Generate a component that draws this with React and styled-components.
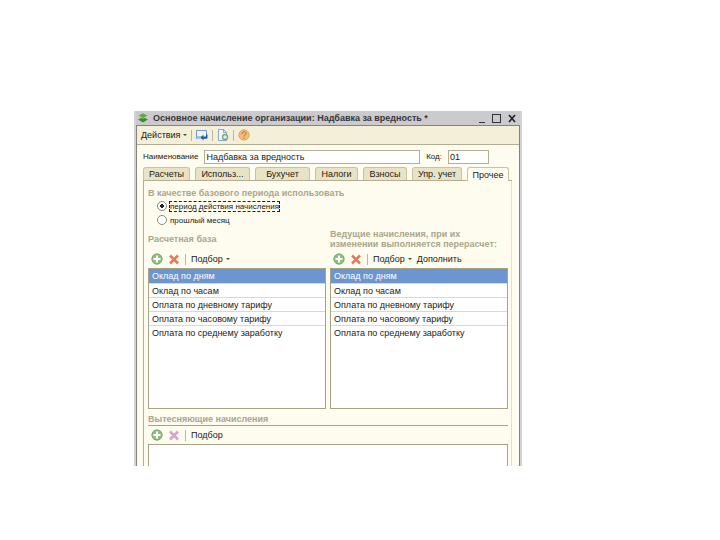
import React, { useState } from 'react';
import styled, { createGlobalStyle, css } from 'styled-components';

const GlobalStyle = createGlobalStyle`
  * {
    box-sizing: border-box;
  }

  body {
    margin: 0;
    background: #fff;
    color: #1c1a14;
    font-family: 'Liberation Sans', Arial, sans-serif;
    font-size: 9px;
    line-height: 12px;
  }

  button,
  input {
    font: inherit;
    color: inherit;
  }
`;

const Page = styled.main`
  padding: 111px 198px 74px 134px;
`;

const Window = styled.section`
  border: 2px solid #d3d3d5;
  border-top: 0;
  border-bottom: 0;
`;

const WindowBody = styled.div`
  background: #fefcee;
  border: 1px solid #85837a;
  border-bottom: 0;
`;

const TitleBar = styled.header`
  display: flex;
  align-items: center;
  gap: 4px;
  height: 14px;
  padding: 0 2px 0 1px;
  background: #cbcbcd;
`;

const Title = styled.h1`
  flex: 1;
  margin: 0;
  color: #36363a;
  font-size: 9px;
  line-height: 14px;
  white-space: nowrap;
`;

const WindowButtons = styled.div`
  display: flex;
  gap: 3px;
`;

const WindowButton = styled.button`
  display: flex;
  width: 12px;
  height: 12px;
  padding: 0;
  border: 0;
  background: none;
`;

const Toolbar = styled.div`
  display: flex;
  align-items: center;
  gap: 4px;
  height: 19px;
  padding: 0 4px;
  background: #f3efd9;
  border-bottom: 1px solid #b5ae92;
`;

const ToolButton = styled.button`
  display: flex;
  align-items: center;
  gap: 3px;
  padding: 0;
  border: 0;
  background: none;
  white-space: nowrap;
`;

const Separator = styled.span`
  width: 1px;
  height: 11px;
  background: #bdb799;
`;

const Caret = styled.span`
  border: 2px solid transparent;
  border-top-color: #4b4738;
  border-bottom: 0;
`;

const Fields = styled.div`
  display: flex;
  align-items: center;
  gap: 6px;
  padding: 5px 30px 0 6px;
`;

const FieldLabel = styled.label`
  font-size: 8px;
`;

const TextInput = styled.input`
  flex: ${({ $wide }) => ($wide ? '1' : '0 0 41px')};
  min-width: 0;
  height: 14px;
  padding: 0 1px;
  background: #fff;
  border: 1px solid #b5ae92;
  outline: 0;
`;

const TabList = styled.div`
  display: flex;
  align-items: flex-end;
  gap: 5px;
  margin: 3px 7px 0 6px;
  padding-right: 3px;
  border-bottom: 1px solid #b5ae92;
`;

const Tab = styled.button`
  flex: ${({ $width }) => `1 1 ${$width}px`};
  height: 13px;
  padding: 1px 0 0;
  background: #e9e3c6;
  border: 1px solid #c9c2a0;
  border-bottom: 0;
  border-radius: 3px 3px 0 0;
  line-height: 11px;
  white-space: nowrap;

  ${({ $active }) =>
    $active &&
    css`
      height: 14px;
      margin-bottom: -1px;
      background: #fefcee;
    `}
`;

const Panel = styled.div`
  margin: 0 7px 0 6px;
  padding: 6px 3px 0 4px;
  border-left: 1px solid #b5ae92;
  border-right: 1px solid #e6e0c8;
`;

const Heading = styled.h2`
  margin: 0;
  color: #aba68c;
  font-size: 9px;
  line-height: ${({ $tight }) => ($tight ? '10px' : '12px')};
`;

const Radios = styled.div`
  display: flex;
  flex-direction: column;
  align-items: flex-start;
  padding-left: 9px;
  font-size: 8px;
`;

const RadioLabel = styled.label`
  display: flex;
  align-items: center;
  gap: 3px;
  height: 14px;
  line-height: 9px;
`;

const Radio = styled.input`
  appearance: none;
  width: 10px;
  height: 10px;
  margin: 0;
  background: #fff;
  border: 1px solid #8e8a7a;
  border-radius: 50%;

  &:checked {
    background: radial-gradient(#222 0 2px, #fff 2px);
  }

  &:checked + span {
    outline: 1px dashed #222;
  }
`;

const Columns = styled.div`
  display: grid;
  grid-template-columns: 1fr 1fr;
  gap: 4px;
  margin-top: 1px;
`;

const ColumnHeading = styled.div`
  display: flex;
  align-items: center;
  height: 22px;
`;

const ListToolbar = styled.div`
  display: flex;
  align-items: center;
  gap: 5px;
  height: 18px;
  padding: 0 3px;
`;

const List = styled.ul`
  height: 141px;
  margin: 0;
  padding: 0;
  background: #fff;
  border: 1px solid #a8a287;
  list-style: none;
`;

const Row = styled.li`
  height: 14px;
  padding: 1px 3px;
  border-bottom: 1px solid #d8d8d8;
  white-space: nowrap;

  &:first-child {
    height: 15px;
  }

  &:last-child {
    border-bottom: 0;
  }

  ${({ $selected }) =>
    $selected &&
    css`
      background: #6b96cf;
      color: #fff;
    `}
`;

const Displaced = styled.section`
  margin-top: 4px;
`;

const DisplacedHeader = styled.div`
  border-bottom: 1px solid #a8a287;
`;

const DisplacedList = styled.div`
  height: 22px;
  background: #fff;
  border: 1px solid #a8a287;
  border-bottom: 0;
`;

const LogoIcon = () => (
  <svg width="12" height="12" viewBox="0 0 12 12">
    <path d="M6 5l5 2.5L6 10.5 1 7.5z" fill="#3f8d2c" />
    <path d="M6 1l5 2.5L6 6.5 1 3.5z" fill="#62ac3f" stroke="#d7e8c8" strokeWidth=".4" />
  </svg>
);

const MinimizeIcon = () => (
  <svg width="12" height="12" viewBox="0 0 12 12">
    <path d="M3 10.5h6" stroke="#33333a" />
  </svg>
);

const MaximizeIcon = () => (
  <svg width="12" height="12" viewBox="0 0 12 12">
    <path d="M1 2.5h9M1.5 2v8.5M9.5 2v8.5M1 10.5h9" fill="none" stroke="#33333a" />
  </svg>
);

const CloseIcon = () => (
  <svg width="12" height="12" viewBox="0 0 12 12">
    <path d="M3 3l6 7M9 3l-6 7" stroke="#26262c" strokeWidth="1.8" />
  </svg>
);

const AddIcon = () => (
  <svg width="12" height="12" viewBox="0 0 12 12">
    <circle cx="6" cy="6" r="5.2" fill="#8fbd82" stroke="#6fa163" strokeWidth=".8" />
    <path d="M6 2.5v7M2.5 6h7" stroke="#fff" strokeWidth="2" />
  </svg>
);

const RemoveIcon = ({ muted }) => (
  <svg width="12" height="12" viewBox="0 0 12 12">
    <path d="M2 2.5l8 8M10 2.5l-8 8" stroke={muted ? '#d6a4ca' : '#df7a60'} strokeWidth="2.5" />
  </svg>
);

const SaveIcon = () => (
  <svg width="12" height="12" viewBox="0 0 12 12">
    <path d="M.5 1.5h10v8H.5z" fill="#eef4fa" stroke="#7199c9" />
    <path d="M1 7h5v3H1z" fill="#a9c3e2" />
    <path d="M4.5 8.5l3-3v2H10v-2h1.5v4h-4v2z" fill="#285f9f" />
  </svg>
);

const DocumentIcon = () => (
  <svg width="12" height="12" viewBox="0 0 12 12">
    <path d="M1.5.5h5l3 3v8h-8z" fill="#f3f7fb" stroke="#88a7cc" />
    <path d="M6.5.5v3h3" fill="none" stroke="#88a7cc" />
    <circle cx="8" cy="8" r="2.5" fill="#e4f0e0" stroke="#7cab80" strokeWidth="1.4" />
  </svg>
);

const HelpIcon = () => (
  <svg width="12" height="12" viewBox="0 0 12 12">
    <circle cx="6" cy="6" r="5.2" fill="#f1bd78" stroke="#d9a05c" strokeWidth=".8" />
    <path d="M4 5c0-3 4-3 4-.5C8 6 6 5.5 6 7.5M6 8.5v1.2" fill="none" stroke="#b86c35" />
  </svg>
);

const tabs = [
  { name: 'Расчеты', width: 47 },
  { name: 'Использ...', width: 55 },
  { name: 'Бухучет', width: 55 },
  { name: 'Налоги', width: 43 },
  { name: 'Взносы', width: 44 },
  { name: 'Упр. учет', width: 50 },
  { name: 'Прочее', width: 42 },
];

const accruals = [
  'Оклад по дням',
  'Оклад по часам',
  'Оплата по дневному тарифу',
  'Оплата по часовому тарифу',
  'Оплата по среднему заработку',
];

const ListActions = ({ muted, fill, plain }) => (
  <ListToolbar>
    <ToolButton aria-label="Добавить"><AddIcon /></ToolButton>
    <ToolButton aria-label="Удалить"><RemoveIcon muted={muted} /></ToolButton>
    <Separator />
    <ToolButton>Подбор {!plain && <Caret />}</ToolButton>
    {fill && <ToolButton>Дополнить</ToolButton>}
  </ListToolbar>
);

const AccrualList = () => {
  const [selected, setSelected] = useState(0);

  return (
    <List>
      {accruals.map((name, index) => (
        <Row key={name} $selected={index === selected} onClick={() => setSelected(index)}>
          {name}
        </Row>
      ))}
    </List>
  );
};

const App = () => {
  const [activeTab, setActiveTab] = useState('Прочее');
  const [name, setName] = useState('Надбавка за вредность');
  const [code, setCode] = useState('01');

  return (
    <Page>
      <GlobalStyle />
      <Window>
        <TitleBar>
          <LogoIcon />
          <Title>Основное начисление организации: Надбавка за вредность *</Title>
          <WindowButtons>
            <WindowButton aria-label="Свернуть"><MinimizeIcon /></WindowButton>
            <WindowButton aria-label="Развернуть"><MaximizeIcon /></WindowButton>
            <WindowButton aria-label="Закрыть"><CloseIcon /></WindowButton>
          </WindowButtons>
        </TitleBar>
        <WindowBody>
          <Toolbar>
            <ToolButton>Действия <Caret /></ToolButton>
            <Separator />
            <ToolButton aria-label="Записать"><SaveIcon /></ToolButton>
            <Separator />
            <ToolButton aria-label="Обновить"><DocumentIcon /></ToolButton>
            <Separator />
            <ToolButton aria-label="Справка"><HelpIcon /></ToolButton>
          </Toolbar>
          <Fields>
            <FieldLabel htmlFor="name">Наименование</FieldLabel>
            <TextInput id="name" $wide value={name} onChange={(e) => setName(e.target.value)} />
            <FieldLabel htmlFor="code">Код:</FieldLabel>
            <TextInput id="code" value={code} onChange={(e) => setCode(e.target.value)} />
          </Fields>
          <TabList role="tablist">
            {tabs.map((tab) => (
              <Tab
                key={tab.name}
                role="tab"
                aria-selected={tab.name === activeTab}
                $width={tab.width}
                $active={tab.name === activeTab}
                onClick={() => setActiveTab(tab.name)}
              >
                {tab.name}
              </Tab>
            ))}
          </TabList>
          <Panel>
            <Heading>В качестве базового периода использовать</Heading>
            <Radios>
              <RadioLabel>
                <Radio type="radio" name="period" defaultChecked />
                <span>период действия начисления</span>
              </RadioLabel>
              <RadioLabel>
                <Radio type="radio" name="period" />
                <span>прошлый месяц</span>
              </RadioLabel>
            </Radios>
            <Columns>
              <section>
                <ColumnHeading><Heading>Расчетная база</Heading></ColumnHeading>
                <ListActions />
                <AccrualList />
              </section>
              <section>
                <ColumnHeading>
                  <Heading $tight>
                    Ведущие начисления, при их
                    <br />
                    изменении выполняется перерасчет:
                  </Heading>
                </ColumnHeading>
                <ListActions fill />
                <AccrualList />
              </section>
            </Columns>
            <Displaced>
              <DisplacedHeader>
                <Heading>Вытесняющие начисления</Heading>
              </DisplacedHeader>
              <ListActions muted plain />
              <DisplacedList />
            </Displaced>
          </Panel>
        </WindowBody>
      </Window>
    </Page>
  );
};

export default App;
